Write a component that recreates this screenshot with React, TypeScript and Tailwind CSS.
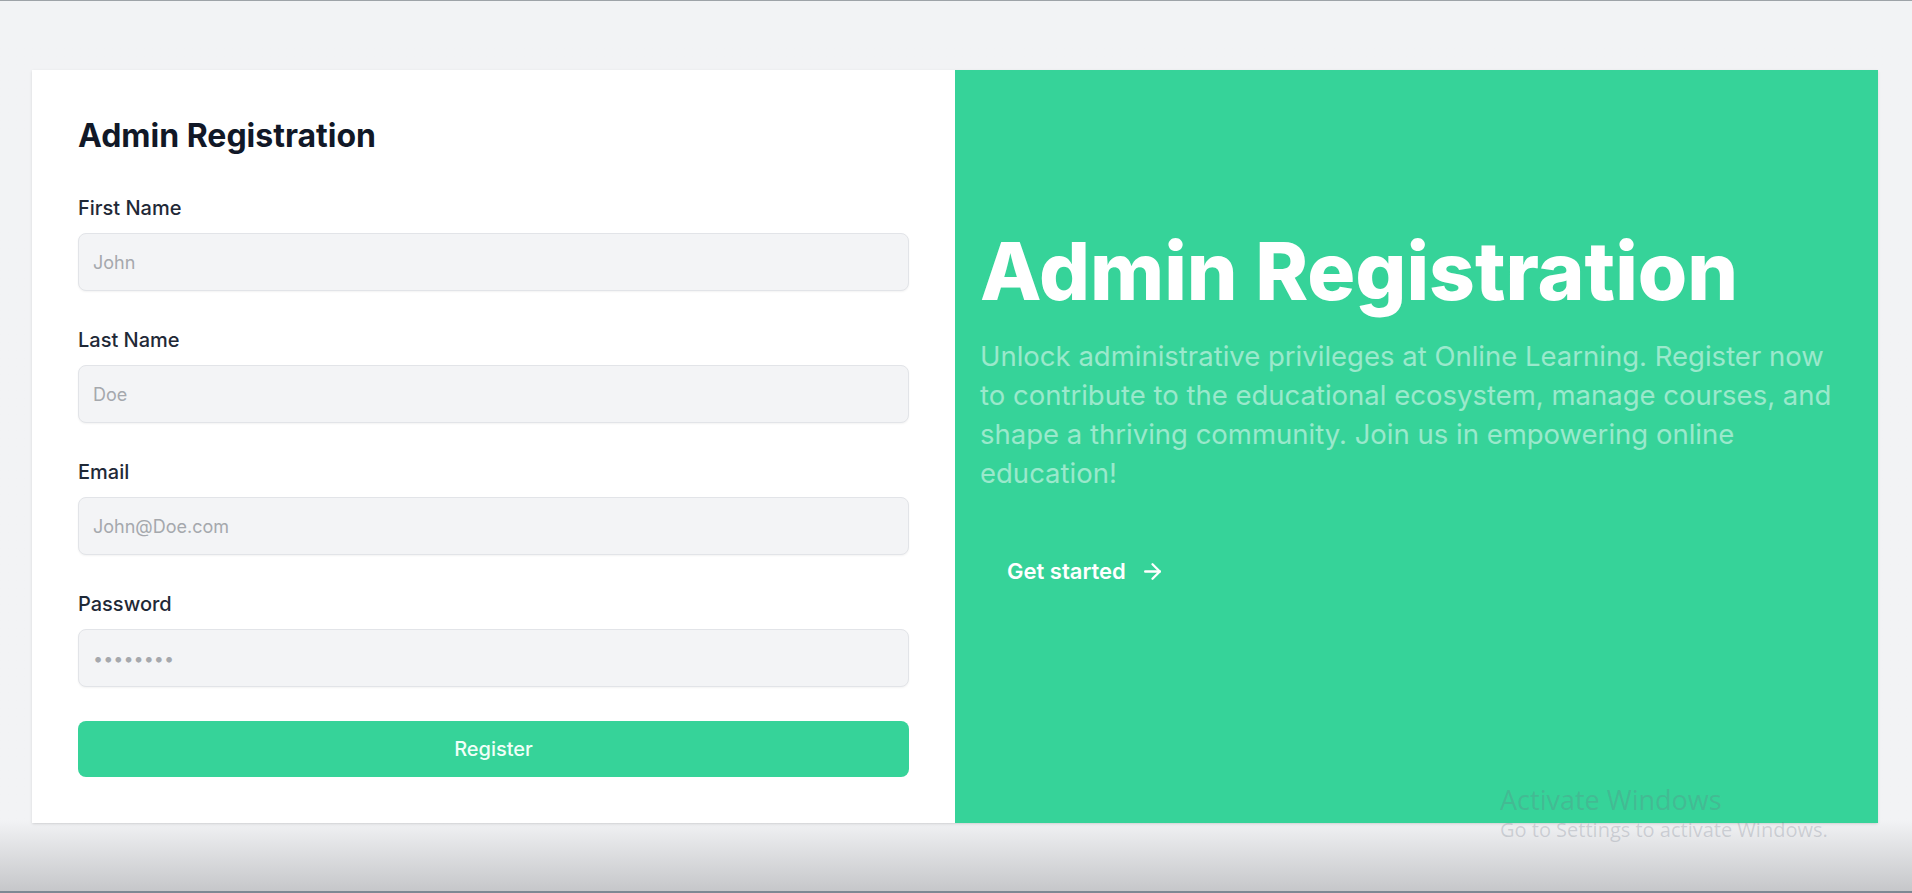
import { ArrowRight } from "lucide-react";

const fields = [
  { label: "First Name", placeholder: "John" },
  { label: "Last Name", placeholder: "Doe" },
  { label: "Email", placeholder: "John@Doe.com" },
  { label: "Password", placeholder: "••••••••" },
];

export default function App() {
  return (
    <div
      className="relative flex h-[893px] flex-col overflow-hidden border-t border-b-2 border-t-[#9ea3a8] border-b-[#7d8893] bg-linear-to-b from-[#f2f3f5] from-[92%] to-[#c6c7ca]"
      style={{ fontFamily: "Inter, 'Noto Sans', sans-serif" }}
    >
      <div className="mt-[69px] ml-[32px] flex h-[753px] w-[1846px] shadow-sm">
        {/* form side */}
        <div className="w-[923px] bg-white px-[46px] pt-[47px]">
          <h1 className="text-[32px] leading-[38px] font-bold text-[#111827]">
            Admin Registration
          </h1>

          <form className="mt-[39px]" onSubmit={(e) => e.preventDefault()}>
            {fields.map((f, i) => (
              <div key={f.label} className={i === 0 ? "" : "mt-[35px]"}>
                <label className="block text-[20px] leading-[28px] font-medium text-[#1f2937]">
                  {f.label}
                </label>
                <input
                  type="text"
                  placeholder={f.placeholder}
                  className="mt-[11px] h-[58px] w-full rounded-lg border border-[#e2e4e8] bg-[#f3f4f6] px-[14px] text-[18px] text-[#374151] shadow-xs outline-none placeholder:text-[#a5a8ad]"
                />
              </div>
            ))}

            <button
              type="submit"
              className="mt-[34px] h-[56px] w-full rounded-lg bg-[#36d399] text-[20px] font-medium text-[#f0fff8]"
            >
              Register
            </button>
          </form>
        </div>

        {/* hero side */}
        <div className="flex-1 bg-[#36d399] pt-[161px] pr-[28px] pl-[25px]">
          <h2 className="text-[80px] leading-none font-extrabold text-white">
            Admin Registration
          </h2>
          <p className="mt-[26px] max-w-[868px] text-[27.5px] leading-[39px] text-white/50">
            Unlock administrative privileges at Online Learning. Register now
            to contribute to the educational ecosystem, manage courses, and
            shape a thriving community. Join us in empowering online
            education!
          </p>
          <button className="mt-[50px] inline-flex h-[56px] items-center gap-[14px] rounded-lg px-[27px] text-[22px] font-semibold text-white">
            Get started
            <ArrowRight size={25} strokeWidth={2.25} />
          </button>
        </div>
      </div>

      {/* OS watermark over the page */}
      <div
        className="pointer-events-none absolute top-[783px] left-[1500px] text-gray-500/25"
        style={{ fontFamily: "'Open Sans', sans-serif" }}
      >
        <div className="text-[27px] leading-[32px]">Activate Windows</div>
        <div className="mt-[2px] text-[20px] leading-[24px]">
          Go to Settings to activate Windows.
        </div>
      </div>
    </div>
  );
}
